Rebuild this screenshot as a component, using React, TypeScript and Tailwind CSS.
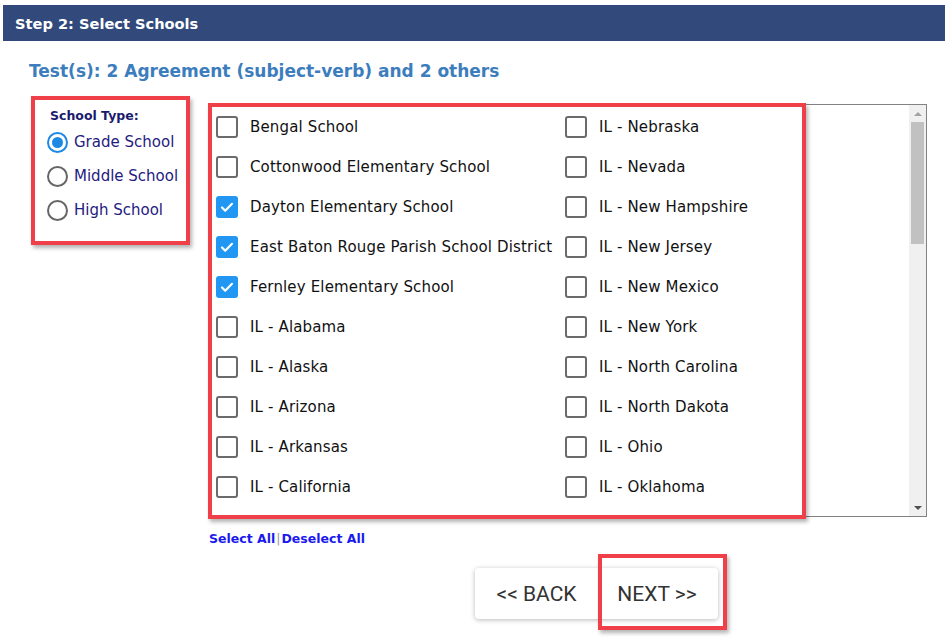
const left = [
  { name: 'Bengal School', checked: false },
  { name: 'Cottonwood Elementary School', checked: false },
  { name: 'Dayton Elementary School', checked: true },
  { name: 'East Baton Rouge Parish School District', checked: true },
  { name: 'Fernley Elementary School', checked: true },
  { name: 'IL - Alabama', checked: false },
  { name: 'IL - Alaska', checked: false },
  { name: 'IL - Arizona', checked: false },
  { name: 'IL - Arkansas', checked: false },
  { name: 'IL - California', checked: false },
];

const right = [
  'IL - Nebraska',
  'IL - Nevada',
  'IL - New Hampshire',
  'IL - New Jersey',
  'IL - New Mexico',
  'IL - New York',
  'IL - North Carolina',
  'IL - North Dakota',
  'IL - Ohio',
  'IL - Oklahoma',
];

const Checkbox = ({ checked }: { checked: boolean }) =>
  checked ? (
    <div className="w-[22px] h-[22px] rounded-[3px] bg-[#2196f3] flex items-center justify-center shrink-0">
      <svg width="16" height="16" viewBox="0 0 16 16" fill="none">
        <path d="M3 8.5l3.2 3.2L13 4.8" stroke="white" strokeWidth="2.2" strokeLinecap="round" strokeLinejoin="round" />
      </svg>
    </div>
  ) : (
    <div className="w-[22px] h-[22px] rounded-[3px] border-2 border-[#6b6b6b] bg-white shrink-0" />
  );

const Radio = ({ checked, label }: { checked: boolean; label: string }) => (
  <div className="flex items-center h-[34px]">
    {checked ? (
      <div className="w-[21px] h-[21px] rounded-full border-2 border-[#1e88e5] flex items-center justify-center">
        <div className="w-[11px] h-[11px] rounded-full bg-[#1e88e5]" />
      </div>
    ) : (
      <div className="w-[21px] h-[21px] rounded-full border-2 border-[#666]" />
    )}
    <span className="ml-[6px] text-[15px] text-[#1f2080]">{label}</span>
  </div>
);

const Row = ({ name, checked }: { name: string; checked: boolean }) => (
  <div className="flex items-center h-[40px] gap-[12px]">
    <Checkbox checked={checked} />
    <span className="text-[15px] tracking-[0.15px] text-[#111] whitespace-nowrap">{name}</span>
  </div>
);

// last row is only half scrolled into view
const PartialRow = () => (
  <div className="flex items-center h-[40px]">
    <Checkbox checked={false} />
  </div>
);

export default function App() {
  return (
    <div className="w-[945px] h-[640px] bg-white font-['DejaVu_Sans',sans-serif] overflow-hidden">
      <div className="ml-[3px] mt-[5px] h-[36px] bg-[#31497b] flex items-center pl-[12px] pt-[1px] text-white font-bold text-[14.6px]">
        Step 2: Select Schools
      </div>

      <div className="ml-[29px] mt-[20px] leading-[20px] text-[17px] font-bold text-[#3c7dbd]">
        Test(s): 2 Agreement (subject-verb) and 2 others
      </div>

      <div className="flex items-start mt-[15px]">
        {/* school type */}
        <div className="ml-[31px] w-[159px] h-[149px] border-4 border-[#ef4049] shadow-[2px_3px_4px_rgba(0,0,0,0.3)] pl-[12px] pt-[9px]">
          <div className="ml-[3px] text-[12.5px] font-bold text-[#1b1b6e] leading-[14px]">School Type:</div>
          <div className="mt-[2px]">
            <Radio checked label="Grade School" />
            <Radio checked={false} label="Middle School" />
            <Radio checked={false} label="High School" />
          </div>
        </div>

        {/* school list */}
        <div className="ml-[18px] mt-[8px] relative">
          <div className="w-[719px] h-[413px] border border-[#828282] flex">
            <div className="flex-1 overflow-hidden pl-[7px] pt-[2px] grid grid-cols-[349px_1fr] content-start">
              <div>
                {left.map((s) => (
                  <Row key={s.name} name={s.name} checked={s.checked} />
                ))}
                <PartialRow />
              </div>
              <div>
                {right.map((s) => (
                  <Row key={s} name={s} checked={false} />
                ))}
                <PartialRow />
              </div>
            </div>
            <div className="w-[17px] bg-[#f0f0f0] flex flex-col items-center">
              <div className="h-[17px] flex items-center justify-center">
                <div className="w-0 h-0 border-l-[4px] border-r-[4px] border-b-[4px] border-l-transparent border-r-transparent border-b-[#a3a3a3]" />
              </div>
              <div className="w-[13px] h-[122px] bg-[#c1c1c1]" />
              <div className="flex-1" />
              <div className="h-[17px] flex items-center justify-center">
                <div className="w-0 h-0 border-l-[4px] border-r-[4px] border-t-[4px] border-l-transparent border-r-transparent border-t-[#505050]" />
              </div>
            </div>
          </div>
          <div className="absolute left-0 top-[-1px] w-[598px] h-[416px] border-4 border-[#ef4049] shadow-[2px_3px_4px_rgba(0,0,0,0.3)] pointer-events-none" />
        </div>
      </div>

      <div className="ml-[209px] mt-[14px] leading-[16px] text-[12.5px] font-bold text-[#1a1aee] flex items-center">
        <span>Select All</span>
        <span className="mx-[1px] font-normal text-[#999]">|</span>
        <span>Deselect All</span>
      </div>

      <div className="ml-[475px] mt-[21px] relative w-[243px]">
        <div className="flex h-[51px] bg-white rounded-[4px] shadow-[0_1px_5px_rgba(0,0,0,0.28)] font-['Roboto',sans-serif] text-[21px] text-[#333]">
          <div className="w-[123px] flex items-center justify-center pt-[2px]">&lt;&lt; BACK</div>
          <div className="w-[120px] flex items-center justify-center pr-[2px] pt-[2px]">NEXT &gt;&gt;</div>
        </div>
        <div className="absolute left-[123px] top-[-14px] w-[129px] h-[76px] border-4 border-[#ef4049] shadow-[2px_3px_4px_rgba(0,0,0,0.3)] pointer-events-none" />
      </div>
    </div>
  );
}
